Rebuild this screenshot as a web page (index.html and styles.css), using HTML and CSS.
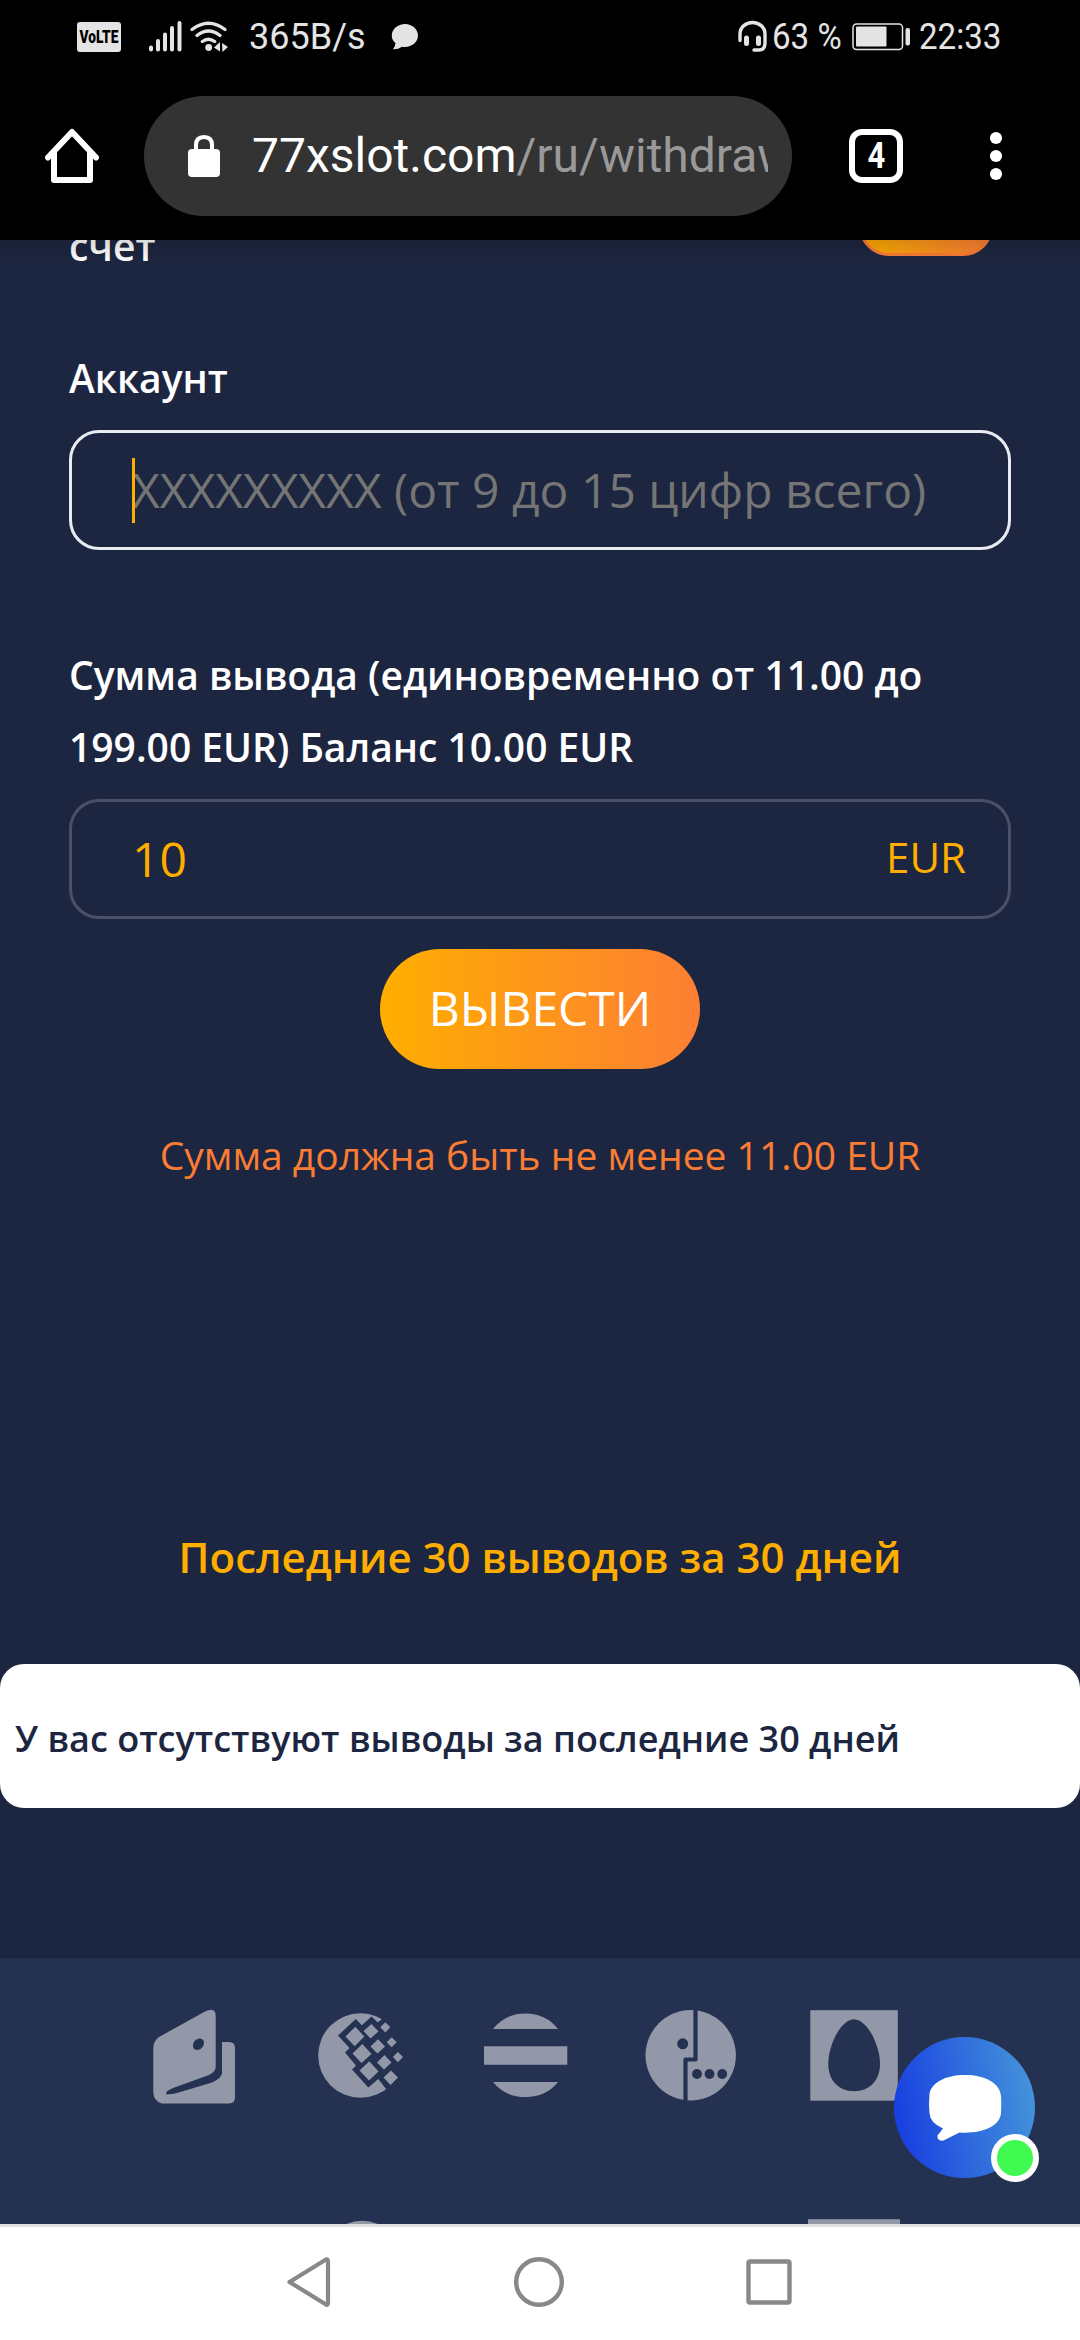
FILE: index.html
```html
<!DOCTYPE html>
<html lang="ru">
<head>
<meta charset="utf-8">
<title>77xslot.com</title>
<link rel="stylesheet" href="styles.css">
</head>
<body>
<header class="status">
  <div class="volte"><span>VoLTE</span></div>
  <svg class="signal" width="80" height="34" viewBox="149 20 80 34">
    <g stroke="#e4e4e4" stroke-width="4" stroke-linecap="round" fill="none">
      <path d="M151 47.500V49.500M158 41V49.500M165 34.500V49.500M172 28V49.500M179.500 23V49.500"/>
      <path stroke-width="3.200" d="M192 29.500Q208.500 17 225 29.500M197 35.500Q208.500 26.500 220 35.500M202.300 41.500Q208.500 37 214.700 41.500"/>
    </g>
    <circle cx="208.700" cy="47.500" r="3.400" fill="#e4e4e4"/>
    <path d="M214 47.500L220 42V51.500ZM222 43L228 47L222.500 52Z" fill="#e4e4e4"/>
  </svg>
  <span class="speed">365B/s</span>
  <svg class="msg" width="28" height="28" viewBox="391 23 28 28"><path fill="#e4e4e4" d="M405 24C412 24 418 29 418 35.500S412 47 405 47Q403.500 47 402 46.700Q398 49.500 393 49.200Q395.500 46.500 395.500 43Q391.800 40 391.800 35.500C391.800 29 398 24 405 24Z"/></svg>
  <svg class="headset" width="32" height="34" viewBox="737 20 32 34">
    <path d="M740 40.500V34C740 27 746 22.500 752.500 22.500S765 27 765 34V43Q765 50 759 50H754" fill="none" stroke="#e4e4e4" stroke-width="3.400" stroke-linecap="round"/>
    <path d="M746.500 38V43.500M758.500 38V43.500" stroke="#e4e4e4" stroke-width="5" stroke-linecap="round"/>
  </svg>
  <span class="percent">63 %</span>
  <svg class="battery" width="60" height="30" viewBox="851 22 60 30">
    <rect x="853" y="24" width="49.500" height="25.500" rx="3.500" fill="none" stroke="#e4e4e4" stroke-width="1.500"/>
    <rect x="856" y="26.500" width="30.500" height="20" rx="1" fill="#e4e4e4"/>
    <rect x="905.500" y="28" width="4.500" height="17.500" rx="2" fill="#e4e4e4"/>
  </svg>
  <span class="clock">22:33</span>
</header>
<nav class="browser">
  <svg class="home" width="56" height="58" viewBox="44 127 56 58"><path d="M48 157.500L72 132L96 157.500M54 152V180H90V152" fill="none" stroke="#fff" stroke-width="6" stroke-linecap="round" stroke-linejoin="round"/></svg>
  <div class="address">
    <svg class="lock" width="32" height="42" viewBox="188 134 32 42"><rect x="188" y="148" width="32" height="28" rx="4" fill="#fff"/><path d="M196 149V144Q196 136 204 136T212 144V149" fill="none" stroke="#fff" stroke-width="4"/></svg>
    <div class="url">77xslot.com<span>/ru/withdraw</span></div>
  </div>
  <div class="tabs"><span>4</span></div>
  <svg class="more" width="14" height="50" viewBox="0 0 14 50"><g fill="#fff"><circle cx="7" cy="7" r="6.100"/><circle cx="7" cy="25" r="6.100"/><circle cx="7" cy="43" r="6.100"/></g></svg>
</nav>
<main class="page">
  <section class="form">
    <div class="row"><p class="label">счет</p><div class="mini"></div></div>
    <p class="label account">Аккаунт</p>
    <div class="field active"><i class="caret"></i><span class="hint">XXXXXXXXX (от 9 до 15 цифр всего)</span></div>
    <p class="label sum">Сумма вывода (единовременно от 11.00 до 199.00 EUR) Баланс 10.00 EUR</p>
    <div class="field"><span>10</span><span class="currency">EUR</span></div>
    <div class="submit">ВЫВЕСТИ</div>
    <p class="error">Сумма должна быть не менее 11.00 EUR</p>
  </section>
  <h2 class="title"><span>Последние 30 выводов за 30 дней</span></h2>
  <div class="card"><span>У вас отсутствуют выводы за последние 30 дней</span></div>
  <footer class="partners">
    <svg viewBox="112 1958 165 246">
      <path fill="#9398a9" fill-rule="evenodd" d="M159 2037L205 2011.500Q215.700 2006.500 215.700 2016V2067Q216 2071.500 209 2075L173 2088Q165.500 2091 166 2094Q169 2095 177 2093L212 2082.500Q222 2078 222 2073V2042H229Q235 2042 235 2048V2097Q235 2103.500 229 2103.500H162Q153.300 2101 153.300 2092V2048Q153.300 2041 159 2037ZM193 2044.500Q192.500 2050 198 2050Q204 2048.500 204 2042Q203.500 2038.500 199 2038.500Q193.500 2040 193 2044.500Z"/>
    </svg>
    <svg viewBox="277 1958 165 246">
      <circle cx="360.500" cy="2055.500" r="42.300" fill="#9398a9"/>
      <path fill="#253150" d="M338 2035.500L355.800 2019L361.800 2025.300L371.500 2016.500L377.500 2022.300L382 2017L408 2025V2080L386 2089L378.300 2079L368.300 2087.500L352 2069.500L356 2065.500L345 2052.500L349.500 2048Z"/>
      <g fill="#9398a9"><path d="M345.500 2036.500L355.300 2026.800L364.300 2036.500L354.700 2046.300ZM352.500 2053.500L362.300 2044L371.500 2054L361.500 2063ZM359.500 2070.500L369.300 2061.200L378.500 2071.500L369 2080.500Z"/><path d="M363.500 2031L371.500 2024L378.500 2031.500L370.500 2038.500ZM370.500 2046.500L378 2039.300L385 2046.500L377.500 2053.500ZM377 2062.500L384.500 2055L391.500 2062.500L384 2069.500ZM383.500 2077.500L391 2070.500L398 2077.500L390.500 2085Z"/><path d="M380.300 2027.300L385.300 2022.300L390.300 2027.300L385.300 2032.500ZM386.700 2042.200L391.700 2037.200L396.700 2042.200L391.700 2047.300ZM392.900 2057L397.900 2052L403 2057L397.900 2062.300ZM375 2017.500L382 2019L378 2022.300Z"/></g>
    </svg>
    <svg viewBox="442 1958 165 246">
      <g fill="#9398a9"><path d="M493 2029Q505 2013.500 525.500 2013.500T558 2029ZM484 2046.300H567.300V2064.700H484ZM493 2082H558Q546 2097 525.500 2097T493 2082Z"/></g>
    </svg>
    <svg viewBox="607 1958 165 246">
      <circle cx="690.700" cy="2055.300" r="45.200" fill="#9398a9"/>
      <path d="M695.500 2009V2059.500H685.500V2102" stroke="#253150" stroke-width="4.200" stroke-linejoin="round" fill="none"/>
      <g fill="#253150"><circle cx="682.700" cy="2043.800" r="5.500"/><circle cx="697" cy="2074" r="4.900"/><circle cx="709.500" cy="2074" r="4.900"/><circle cx="722.200" cy="2074" r="4.900"/></g>
    </svg>
    <svg viewBox="772 1958 165 246">
      <rect x="810.300" y="2010.200" width="87.500" height="90.500" fill="#9398a9"/>
      <path d="M854 2019.300C868 2020 880 2046 880 2064C880 2080 870 2091.200 854 2091.200S828.300 2080 828.300 2064C828.300 2046 840 2020 854 2019.300Z" fill="#253150"/>
    </svg>
    <svg viewBox="112 2204 165 20"></svg>
    <svg viewBox="277 2204 165 20"><circle cx="362" cy="2260" r="39.300" fill="#9398a9"/></svg>
    <svg viewBox="442 2204 165 20"></svg>
    <svg viewBox="607 2204 165 20"></svg>
    <svg viewBox="772 2204 165 20"><rect x="808" y="2219.200" width="92" height="10" fill="#9398a9"/></svg>
  </footer>
</main>
<nav class="system">
  <svg width="54" height="54" viewBox="282 2255 54 54"><path d="M289.500 2282L326 2259.500Q328 2259 328 2261.500V2302.500Q328 2305.500 326 2304.500Z" fill="none" stroke="#888" stroke-width="4.200" stroke-linejoin="round"/></svg>
  <svg width="54" height="54" viewBox="513 2255 54 54"><circle cx="540" cy="2282" r="22.800" fill="none" stroke="#888" stroke-width="4.400"/></svg>
  <svg width="54" height="54" viewBox="742 2255 54 54"><rect x="748.500" y="2261.500" width="41" height="41" rx="1.500" fill="none" stroke="#888" stroke-width="4.400"/></svg>
</nav>
<div class="chat">
  <svg width="74" height="68" viewBox="928 2074 74 68"><path fill="#fff" d="M965 2075C985 2075 1000 2083 1001 2096Q1001.500 2104 1001 2113C1000 2126 983 2134 959.500 2132.500L943.500 2140.500Q937 2141.500 937.500 2135.500L943 2128.500Q930 2123 929.500 2113Q928.500 2104 929.500 2094C931 2083 945 2075 965 2075Z"/></svg>
  <i class="online"></i>
</div>
</body>
</html>
```
FILE: styles.css
```css
* { box-sizing: border-box; }
body {
  margin: 0;
  width: 1080px;
  height: 2340px;
  display: flex;
  flex-direction: column;
  position: relative;
  overflow: hidden;
  background: #1d2640;
  color: #fff;
  font-family: "Open Sans", "Noto Sans", sans-serif;
}
p, h2 { margin: 0; }
svg { display: block; flex: none; }

.status {
  height: 72px;
  flex: none;
  display: flex;
  align-items: center;
  padding: 2px 0 0 77px;
  background: #000;
  color: #e4e4e4;
  font: 36px/72px Roboto, sans-serif;
  white-space: nowrap;
}
.volte {
  width: 44px;
  height: 30px;
  border-radius: 3px;
  background: #e4e4e4;
  color: #000;
  display: flex;
  align-items: center;
  justify-content: center;
  font: 900 19px/30px Roboto, sans-serif;
}
.volte span { flex: none; transform: scaleX(.72); }
.signal { margin-left: 28px; }
.speed { width: 114px; margin-left: 20px; }
.msg { margin-left: 28px; }
.headset { margin-left: 318px; }
.percent, .clock { transform: scaleX(.92); transform-origin: left; }
.percent { width: 73px; margin-left: 3px; }
.battery { margin-left: 6px; }
.clock { margin-left: 8px; }

.browser {
  height: 168px;
  flex: none;
  display: flex;
  align-items: center;
  padding: 0 0 0 44px;
  background: #000;
  font-family: Roboto, sans-serif;
}
.address {
  width: 648px;
  height: 120px;
  margin-left: 44px;
  padding: 0 24px 0 44px;
  display: flex;
  align-items: center;
  border-radius: 60px;
  background: #333;
}
.url {
  flex: 1;
  margin-left: 32px;
  overflow: hidden;
  white-space: nowrap;
  font-size: 48px;
  line-height: 72px;
}
.url span { color: #999; }
.tabs {
  width: 54px;
  height: 54px;
  margin-left: 57px;
  border: 6px solid #fff;
  border-radius: 13px;
  text-align: center;
  font: 700 36px/43px Roboto, sans-serif;
}
.tabs span { display: inline-block; transform: scaleX(.86); }
.more { margin-left: 86px; }

.page {
  flex: 1;
  display: flex;
  flex-direction: column;
  overflow: hidden;
  position: relative;
}
.page::before {
  content: "";
  position: absolute;
  inset: 0 0 auto;
  height: 24px;
  z-index: 1;
  background: linear-gradient(rgba(0, 0, 0, .14), rgba(0, 0, 0, 0));
}
.form {
  margin-top: -30px;
  padding: 0 69px;
  display: flex;
  flex-direction: column;
}
.row { display: flex; justify-content: space-between; height: 72px; }
.mini {
  width: 134px;
  height: 72px;
  margin: -26px 18px 0 0;
  border: 3px solid #fb7d34;
  border-radius: 30px;
  background: linear-gradient(90deg, #ffae00, #fd7e34);
}
.label {
  font-size: 39px;
  font-weight: 600;
  line-height: 72px;
}
.account { margin-top: 60px; }
.sum { margin-top: 89px; }
.field {
  height: 120px;
  margin-top: 16px;
  padding: 0 42px 0 60px;
  border: 3px solid #4b5069;
  border-radius: 30px;
  display: flex;
  align-items: center;
  justify-content: space-between;
  position: relative;
  color: #ffae00;
  font-size: 48px;
  line-height: 72px;
  white-space: nowrap;
}
.active { border-color: #e9ebf2; }
.hint { color: #757575; }
.caret {
  position: absolute;
  left: 60px;
  top: 25px;
  width: 3px;
  height: 65px;
  background: #ffae00;
}
.currency { font-size: 42px; padding-bottom: 4px; }
.submit {
  width: 320px;
  height: 120px;
  margin: 30px auto 0;
  border-radius: 60px;
  background: linear-gradient(90deg, #ffae00, #fd7e34);
  font-size: 48px;
  line-height: 117px;
  text-align: center;
}
.error {
  margin-top: 50px;
  color: #fb7d34;
  font-size: 39px;
  line-height: 72px;
  text-align: center;
  white-space: nowrap;
}
.title {
  margin-top: 330px;
  color: #ffae00;
  font-size: 42px;
  font-weight: 600;
  line-height: 72px;
  text-align: center;
}
.card {
  height: 144px;
  flex: none;
  margin-top: 71px;
  padding: 3px 15px 0;
  border-radius: 24px;
  background: #fff;
  color: #1d2640;
  font-size: 36px;
  font-weight: 600;
  line-height: 144px;
}
.partners {
  margin-top: 150px;
  flex: 1;
  padding: 0 143px 0 112px;
  display: grid;
  grid-template-columns: repeat(5, 165px);
  grid-template-rows: 246px 20px;
  background: #253150;
}
.system {
  height: 116px;
  flex: none;
  display: flex;
  align-items: center;
  justify-content: space-between;
  padding: 0 284px 3px 282px;
  border-top: 3px solid #e0e0e0;
  background: #fff;
}
.chat {
  position: absolute;
  left: 894px;
  top: 2037px;
  width: 141px;
  height: 141px;
  border-radius: 50%;
  background: linear-gradient(80deg, #1538e0, #4799da);
  display: flex;
  align-items: center;
  justify-content: center;
}
.online {
  position: absolute;
  right: -4px;
  bottom: -4px;
  width: 48px;
  height: 48px;
  border: 6px solid #fff;
  border-radius: 50%;
  background: #40f951;
}
```
